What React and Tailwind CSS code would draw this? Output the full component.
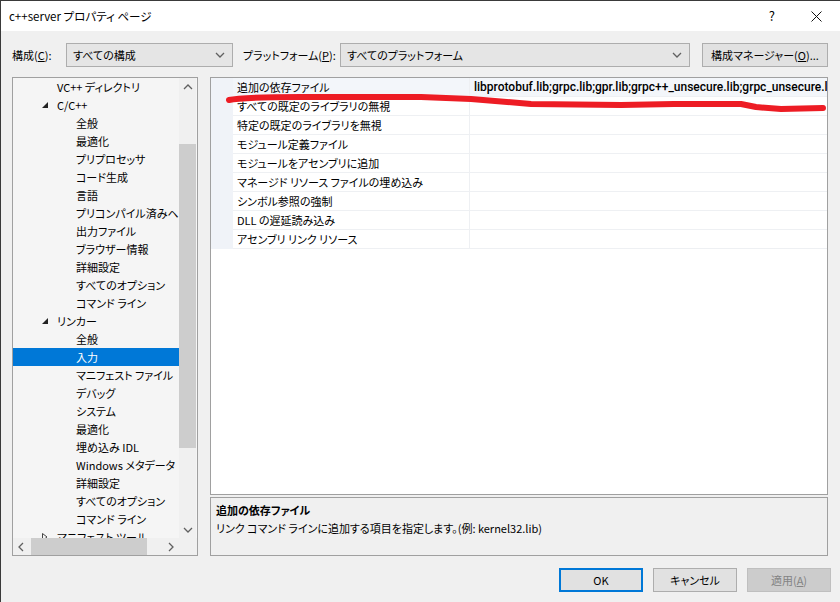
import React from "react";

const treeRows = [
  { label: "VC++ ディレクトリ", level: 1 },
  { label: "C/C++", level: 1, open: true },
  { label: "全般", level: 2 },
  { label: "最適化", level: 2 },
  { label: "プリプロセッサ", level: 2 },
  { label: "コード生成", level: 2 },
  { label: "言語", level: 2 },
  { label: "プリコンパイル済みヘッダー", level: 2 },
  { label: "出力ファイル", level: 2 },
  { label: "ブラウザー情報", level: 2 },
  { label: "詳細設定", level: 2 },
  { label: "すべてのオプション", level: 2 },
  { label: "コマンド ライン", level: 2 },
  { label: "リンカー", level: 1, open: true },
  { label: "全般", level: 2 },
  { label: "入力", level: 2, selected: true },
  { label: "マニフェスト ファイル", level: 2 },
  { label: "デバッグ", level: 2 },
  { label: "システム", level: 2 },
  { label: "最適化", level: 2 },
  { label: "埋め込み IDL", level: 2 },
  { label: "Windows メタデータ", level: 2 },
  { label: "詳細設定", level: 2 },
  { label: "すべてのオプション", level: 2 },
  { label: "コマンド ライン", level: 2 },
  { label: "マニフェスト ツール", level: 1, open: false },
];

const props = [
  { name: "追加の依存ファイル", value: "libprotobuf.lib;grpc.lib;gpr.lib;grpc++_unsecure.lib;grpc_unsecure.lib;zlib.lib;%(AdditionalDependencies)" },
  { name: "すべての既定のライブラリの無視" },
  { name: "特定の既定のライブラリを無視" },
  { name: "モジュール定義ファイル" },
  { name: "モジュールをアセンブリに追加" },
  { name: "マネージド リソース ファイルの埋め込み" },
  { name: "シンボル参照の強制" },
  { name: "DLL の遅延読み込み" },
  { name: "アセンブリ リンク リソース" },
];

const Chevron = ({ dir = "down" }) => {
  const pts = {
    down: "1,3 5,7 9,3",
    up: "1,7 5,3 9,7",
    left: "6,1 2,5 6,9",
    right: "3,1 7,5 3,9",
  }[dir];
  return (
    <svg width="10" height="10" viewBox="0 0 10 10">
      <polyline points={pts} fill="none" stroke="#606060" strokeWidth="1.3" />
    </svg>
  );
};

const Combo = ({ text, className }) => (
  <div className={`h-[24px] bg-[#e5e5e5] border border-[#adadad] flex items-center justify-between pl-[6px] pr-[7px] ${className}`}>
    <span>{text}</span>
    <Chevron dir="down" />
  </div>
);

const App = () => {
  return (
    <div
      className="relative w-[840px] h-[602px] bg-[#f0f0f0] overflow-hidden border-l border-t border-[#3a3a3a] text-[11px] leading-[16px] text-black whitespace-nowrap [font-feature-settings:'palt']"
      style={{ fontFamily: '"Noto Sans CJK JP", "Noto Sans", sans-serif' }}
    >
      {/* title bar */}
      <div className="h-[30px] bg-white flex items-center justify-between pl-[8px] pr-[18px]">
        <span className="text-[11.5px]">c++server プロパティ ページ</span>
        <div className="flex items-center gap-[36px]">
          <span className="text-[13px]">?</span>
          <svg width="11" height="11" viewBox="0 0 11 11">
            <path d="M0.5 0.5 L10.5 10.5 M10.5 0.5 L0.5 10.5" stroke="#111" strokeWidth="1" />
          </svg>
        </div>
      </div>

      {/* configuration row */}
      <div className="flex items-center mt-[12px] pl-[11px]">
        <span className="w-[54px]">構成(<span className="underline">C</span>):</span>
        <Combo text="すべての構成" className="w-[167px]" />
        <span className="ml-[10px] w-[97px]">プラットフォーム(<span className="underline">P</span>):</span>
        <Combo text="すべてのプラットフォーム" className="w-[350px]" />
        <button className="ml-[12px] h-[24px] w-[126px] bg-[#e1e1e1] border border-[#adadad]">
          構成マネージャー(<span className="underline">O</span>)...
        </button>
      </div>

      {/* main area */}
      <div className="flex mt-[10px] pl-[11px]">
        {/* tree */}
        <div className="w-[186px] h-[479px] border border-[#a0a0a0] bg-[#f5f5f5] flex flex-col">
          <div className="flex flex-1 min-h-0">
            <div className="w-[166px] overflow-hidden">
              {treeRows.map((r, i) => (
                <div
                  key={i}
                  className={`h-[18px] flex items-center ${r.selected ? "bg-[#0078d7] text-white" : ""} ${r.level === 1 ? "pl-[29px]" : "pl-[63px]"}`}
                >
                  {r.level === 1 && (
                    <span className="w-[15px] flex items-center">
                      {r.open === true && (
                        <svg width="6" height="6" viewBox="0 0 6 6">
                          <polygon points="6,0 6,6 0,6" fill="#222" />
                        </svg>
                      )}
                      {r.open === false && (
                        <svg width="6" height="8" viewBox="0 0 6 8">
                          <polygon points="0.5,0.5 5,4 0.5,7.5" fill="none" stroke="#444" />
                        </svg>
                      )}
                    </span>
                  )}
                  <span>{r.label}</span>
                </div>
              ))}
            </div>
            <div className="w-[17px] bg-[#f0f0f0] flex flex-col items-center">
              <div className="h-[17px] flex items-center justify-center"><Chevron dir="up" /></div>
              <div className="flex-1 w-full pt-[49px] pb-[73px]">
                <div className="h-full bg-[#cdcdcd]" />
              </div>
              <div className="h-[17px] flex items-center justify-center"><Chevron dir="down" /></div>
            </div>
          </div>
          <div className="h-[17px] flex bg-[#f0f0f0]">
            <div className="w-[166px] flex items-center">
              <div className="w-[17px] flex justify-center"><Chevron dir="left" /></div>
              <div className="w-[116px] h-[17px] bg-[#cdcdcd] ml-[1px]" />
              <div className="flex-1" />
              <div className="w-[17px] flex justify-center"><Chevron dir="right" /></div>
            </div>
          </div>
        </div>

        {/* right column */}
        <div className="ml-[12px] w-[618px] flex flex-col">
          <div className="h-[418px] border border-[#a0a0a0] bg-white flex flex-col">
            {props.map((p, i) => (
              <div key={i} className="flex h-[19px]">
                <div className="w-[22px] bg-[#f0f3f8]" />
                <div className={`w-[236px] flex items-center pl-[4px] border-b border-[#eef0f3] ${i === 0 ? "bg-[#f3f6fa]" : ""}`}>
                  {p.name}
                </div>
                <div
                  className={`flex-1 flex items-center pl-[4px] border-b border-l border-[#eef0f3] overflow-hidden text-[12px] font-medium ${i === 0 ? "bg-[#f3f6fa]" : ""}`}
                  style={{ fontFamily: 'Roboto, "Noto Sans CJK JP", sans-serif' }}
                >
                  {p.value || ""}
                </div>
              </div>
            ))}
          </div>
          <div className="mt-[2px] h-[59px] border border-[#a0a0a0] bg-[#f0f0f0] px-[5px] pt-[3px] leading-[18px]">
            <div className="font-bold">追加の依存ファイル</div>
            <div>リンク コマンド ラインに追加する項目を指定します。(例: kernel32.lib)</div>
          </div>
        </div>
      </div>

      {/* buttons */}
      <div className="flex justify-end gap-[10px] pr-[9px] mt-[12px]">
        <button className="w-[84px] h-[24px] bg-[#e1e1e1] border-2 border-[#0078d7]">OK</button>
        <button className="w-[84px] h-[24px] bg-[#e1e1e1] border border-[#adadad]">キャンセル</button>
        <button className="w-[84px] h-[24px] bg-[#cccccc] border border-[#bfbfbf] text-[#838383]">
          適用(<span className="underline">A</span>)
        </button>
      </div>

      {/* red annotation stroke */}
      <svg className="absolute left-0 top-0 pointer-events-none" width="840" height="602" viewBox="0 0 840 602">
        <path
          d="M228 99 Q 240 96 300 96 L 420 96 L 470 98 L 530 103 L 620 104 L 673 103 L 740 103 L 755 106 L 780 108 L 822 107"
          fill="none"
          stroke="#ed1c24"
          strokeWidth="6"
          strokeLinecap="round"
          strokeLinejoin="round"
        />
      </svg>
    </div>
  );
};

export default App;
